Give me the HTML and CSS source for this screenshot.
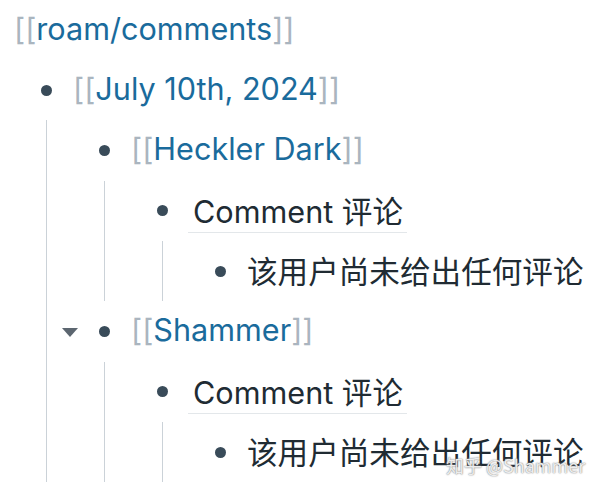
FILE: index.html
```html
<!DOCTYPE html>
<html lang="zh">
<head>
<meta charset="utf-8">
<link rel="stylesheet" href="styles.css">
</head>
<body>
<div class="page">
  <div class="title"><span class="br">[[</span><span class="link">roam/comments</span><span class="br">]]</span></div>
  <div class="tree">
    <div class="block">
      <div class="row"><span class="caret-box"></span><span class="dot-box"><span class="dot"></span></span><span class="content"><span class="br">[[</span><span class="link">July 10th, 2024</span><span class="br">]]</span></span></div>
      <div class="children">
        <div class="block">
          <div class="row"><span class="caret-box"></span><span class="dot-box"><span class="dot"></span></span><span class="content"><span class="br">[[</span><span class="link">Heckler Dark</span><span class="br">]]</span></span></div>
          <div class="children">
            <div class="block">
              <div class="row"><span class="caret-box"></span><span class="dot-box"><span class="dot"></span></span><span class="content"><span class="comment">Comment 评论</span></span></div>
              <div class="children">
                <div class="block">
                  <div class="row"><span class="caret-box"></span><span class="dot-box"><span class="dot"></span></span><span class="content"><span class="text">该用户尚未给出任何评论</span></span></div>
                </div>
              </div>
            </div>
          </div>
        </div>
        <div class="block">
          <div class="row"><span class="caret-box"><span class="caret"></span></span><span class="dot-box"><span class="dot"></span></span><span class="content"><span class="br">[[</span><span class="link">Shammer</span><span class="br">]]</span></span></div>
          <div class="children">
            <div class="block">
              <div class="row"><span class="caret-box"></span><span class="dot-box"><span class="dot"></span></span><span class="content"><span class="comment">Comment 评论</span></span></div>
              <div class="children">
                <div class="block">
                  <div class="row"><span class="caret-box"></span><span class="dot-box"><span class="dot"></span></span><span class="content"><span class="text">该用户尚未给出任何评论</span></span></div>
                </div>
              </div>
            </div>
          </div>
        </div>
      </div>
    </div>
  </div>
  <div class="watermark">知乎 @Shammer</div>
</div>
</body>
</html>
```
FILE: styles.css
```css
html, body {
  margin: 0;
  padding: 0;
  background: #ffffff;
}
body {
  width: 600px;
  height: 491px;
  overflow: hidden;
  font-family: Inter, "Noto Sans CJK SC", sans-serif;
  font-size: 30.6px;
  color: #202b33;
}
.page {
  position: relative;
  width: 600px;
  height: 491px;
}
.title {
  height: 60px;
  display: flex;
  align-items: center;
  padding-left: 14px;
  white-space: nowrap;
}
.title > span {
  margin-bottom: 3px;
}
.br {
  color: #aab5bf;
}
.link {
  color: #1a6b9c;
}
.row {
  height: 60.33px;
  display: flex;
  align-items: center;
  white-space: nowrap;
}
.caret-box {
  width: 24px;
  display: flex;
  justify-content: center;
  align-items: center;
}
.caret {
  width: 0;
  height: 0;
  border-left: 8px solid transparent;
  border-right: 8px solid transparent;
  border-top: 9px solid #5c6670;
  margin-top: 3px;
}
.dot-box {
  width: 20px;
  margin-left: 12px;
  display: flex;
  justify-content: center;
  align-items: center;
}
.dot {
  width: 11px;
  height: 11px;
  border-radius: 50%;
  background: #394b59;
}
.content {
  padding-left: 17px;
  display: flex;
  align-items: center;
  margin-bottom: 3px;
}
.comment {
  display: flex;
  align-items: center;
  height: 44px;
  padding: 0 4px 0 5px;
  margin-left: -1px;
  margin-top: 3px;
  border-bottom: 1px solid #e3e7ea;
}
.children {
  margin-left: 46px;
  border-left: 1px solid #cbd2d8;
  padding-left: 11px;
}
.watermark {
  position: absolute;
  left: 446px;
  top: 452px;
  font-family: "Noto Sans CJK SC", sans-serif;
  font-size: 18px;
  color: rgba(255, 255, 255, 0.85);
  text-shadow: 0 0 1px #8a8a8a, 0 0 2px #9a9a9a;
  white-space: nowrap;
}
```
